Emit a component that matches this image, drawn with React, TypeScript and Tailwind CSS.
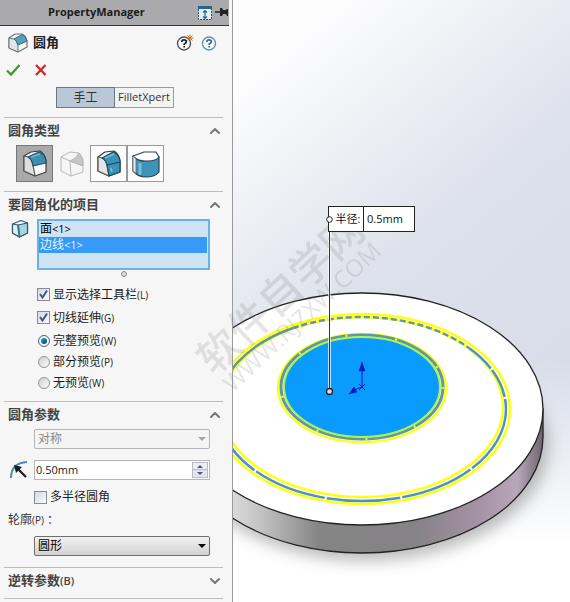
import { useState, type ReactNode } from 'react'
import clsx from 'clsx'
import { ChevronDown, ChevronUp } from 'lucide-react'

function ConstantIcon() {
  return (
    <svg viewBox="0 0 24 27" className="h-[27px] w-6" strokeLinejoin="round" strokeWidth="1.200">
      <path d="M1 6 L8 2 L17 1 Q22 4 23 11 V22 L12 26 L1 21 Z" fill="#fdfdfd" stroke="#3c3c3c" />
      <path d="M1 6 L5 7 Q9 9 10 15 L12 26 L1 21 Z" fill="#dedfe0" stroke="#555" />
      <path d="M5 7 L16 2 Q22 4 23 11 V13 L10 16 Q9 9 5 7 Z" fill="#3d8fb0" stroke="#1d5068" />
      <path d="M8 7 L17 4" stroke="#8ec6dc" />
    </svg>
  )
}

function VariableIcon() {
  return (
    <svg viewBox="0 0 24 27" className="h-[27px] w-6" strokeLinejoin="round" stroke="#b7b7b7">
      <path d="M1 7 L10 2 L19 3 L23 9 V22 L11 26 L1 21 Z" fill="#f5f5f5" />
      <path d="M1 7 L10 11 L11 26 M10 11 L23 16" fill="none" />
      <path d="M10 11 Q16 9 19 3 Q23 7 23 16 Z" fill="#c6c6c6" />
    </svg>
  )
}

function FaceIcon() {
  return (
    <svg viewBox="0 0 24 27" className="h-[27px] w-6" strokeLinejoin="round" strokeWidth="1.200">
      <path d="M1 7 L8 2 L17 1 Q22 4 23 11 V22 L12 26 L1 21 Z" fill="#fdfdfd" stroke="#2d3940" />
      <path d="M1 7 L5 8 Q9 10 10 15 L12 26 L1 21 Z" fill="#e3e5e6" stroke="#555" />
      <path d="M5 8 L16 2 Q22 4 23 11 V22 L12 26 L10 15 Q9 10 5 8 Z" fill="#3b91b6" stroke="#174a62" />
      <path d="M10 15 L23 12" stroke="#174a62" />
      <path d="M8 8 L17 4 M14 18 L15 22" stroke="#79bdd8" strokeWidth="1.500" />
    </svg>
  )
}

function FullRoundIcon() {
  return (
    <svg viewBox="0 0 28 28" className="size-7" strokeLinejoin="round" strokeWidth="1.200">
      <path d="M1 6 V21 Q6 27 14 27 Q23 27 27 22 V7 Z" fill="#3c94b8" stroke="#31434c" />
      <path d="M1 6 L12 2 L24 2 L27 7 Q24 11 16 11 Q6 12 1 6 Z" fill="#fff" stroke="#31434c" />
      <path d="M1 6 V21 L4 23.500 V9 Z" fill="#dfe9ed" stroke="#5d6d75" strokeWidth="0.800" />
      <path d="M8 13 V25" stroke="#79bdd8" strokeWidth="3" />
    </svg>
  )
}

function TitleIcon() {
  return (
    <svg viewBox="0 0 20 20" className="size-5" strokeLinejoin="round">
      <path d="M1 5 L7 1 L14 1 Q18 3 19 8 V14 L10 19 L1 15 Z" fill="#f6f8f8" stroke="#68747a" strokeWidth="1.200" />
      <path d="M1 5 L6 6 Q9 8 10 12 V19 L1 15 Z" fill="#dfe4e6" stroke="#68747a" />
      <path d="M6 6 L14 1.500 Q18 3 19 8 L10 12 Q9 8 6 6 Z" fill="#55a0bb" stroke="#38687b" />
    </svg>
  )
}

function EdgeIcon() {
  return (
    <svg viewBox="0 0 18 20" className="h-5 w-[18px]" strokeLinejoin="round" stroke="#35596b" strokeWidth="1.2">
      <path d="M1.500 5 L10 1.500 L16.500 4 L16.500 14 L8.500 18 L1.500 14 Z" fill="#f4f8fa" />
      <path d="M7 6 L16.500 4 L16.500 14 L8.500 18 Z" fill="#a7d5e2" />
      <path d="M1.500 5 L7 6 L8.500 18 L1.500 14 Z" fill="#e3edf1" />
      <path d="M7 6 L8.500 18" strokeWidth="2" stroke="#347e99" />
    </svg>
  )
}

function RadiusIcon() {
  return (
    <svg viewBox="0 0 20 20" className="size-5" fill="none">
      <path d="M2 18 Q2 3 18 2" stroke="#4d8caf" strokeWidth="2" />
      <path d="M8 8 L17 17" stroke="#1c1c1c" strokeWidth="2.200" />
      <path d="M5 5 L13 7 L7 13 Z" fill="#1c1c1c" />
    </svg>
  )
}

function HelpIcon({ star }: { star?: boolean }) {
  return (
    <svg viewBox="0 0 18 18" className="size-[18px]" fill="none">
      <circle cx="8" cy="9.500" r="6.500" fill="#fafcfd" stroke={star ? '#4d5559' : '#5f93a8'} strokeWidth="1.400" />
      <path d="M5.800 8 Q5.800 5.800 8 5.800 Q10.300 5.800 10.300 7.700 Q10.300 9 8.200 10 L8.200 11 M8.200 12 L8.200 13.600" stroke={star ? '#222' : '#3a6c8f'} strokeWidth="1.700" />
      {star && <path d="M14 0.500 V7.500 M10.500 4 H17.500 M11.500 1.500 L16.500 6.500 M16.500 1.500 L11.500 6.500" stroke="#c4762c" strokeWidth="1" />}
    </svg>
  )
}

function Section({ title, hotkey, open = true, className, children }: {
  title: string
  hotkey?: string
  open?: boolean
  className?: string
  children?: ReactNode
}) {
  const Chevron = open ? ChevronUp : ChevronDown
  return (
    <section className={clsx('ml-1 mr-[9px] border-t border-[#bcbcbc]', className)}>
      <h2 className="h-[27px] text-[13px] font-bold text-[#444]">
        <button className="flex h-full w-full items-center justify-between pb-0.5 pl-1" aria-expanded={open}>
          <span>{title}{hotkey && <span className="text-[11px] font-semibold">{hotkey}</span>}</span>
          <Chevron className="size-4 text-[#777]" strokeWidth={3} />
        </button>
      </h2>
      {children}
    </section>
  )
}

function Check({ label, hotkey, defaultChecked }: { label: string; hotkey?: string; defaultChecked?: boolean }) {
  return (
    <label className="flex items-center gap-[3px]">
      <span className="grid size-[13px]">
        <input type="checkbox" defaultChecked={defaultChecked} className="peer col-start-1 row-start-1 size-[13px] appearance-none border border-[#858b91] bg-linear-to-br from-[#d5d9df] to-[#fafafa]" />
        <svg viewBox="0 0 13 13" className="pointer-events-none invisible col-start-1 row-start-1 size-[13px] peer-checked:visible" fill="none">
          <path d="M3 6 L5.500 9.500 L10 2.500" stroke="#3c5694" strokeWidth="2" />
        </svg>
      </span>
      <span>{label}{hotkey && <span className="text-[10px]">{hotkey}</span>}</span>
    </label>
  )
}

function Radio({ label, hotkey, defaultChecked }: { label: string; hotkey: string; defaultChecked?: boolean }) {
  return (
    <label className="flex h-[21px] items-center gap-[3px]">
      <span className="grid size-[13px] place-items-center">
        <input type="radio" name="preview" defaultChecked={defaultChecked} className="peer col-start-1 row-start-1 size-3 appearance-none rounded-full border border-[#949494] bg-linear-to-br from-[#cfcfcf] to-[#fdfdfd] checked:border-[#40657c] checked:from-[#d9edf5]" />
        <span className="pointer-events-none invisible col-start-1 row-start-1 size-[6px] rounded-full bg-linear-to-br from-[#3fa3c8] to-[#0b3c5c] peer-checked:visible" />
      </span>
      <span>{label}<span className="text-[10px]">{hotkey}</span></span>
    </label>
  )
}

function Combo({ id, value, label, disabled }: { id: string; value: string; label?: string; disabled?: boolean }) {
  return (
    <div className="relative">
      <select
        id={id}
        aria-label={label}
        disabled={disabled}
        className={clsx(
          'block h-5 w-full appearance-none rounded-xs border pl-[3px] text-[12px] leading-[18px]',
          disabled ? 'border-[#b5b5b5] bg-[#f4f4f4] text-[#8a8a8a] opacity-100' : 'border-[#6f6f6f] bg-linear-to-b from-[#f2f2f2] to-[#d2d2d2] text-black'
        )}
      >
        <option>{value}</option>
      </select>
      <svg viewBox="0 0 8 4" className={clsx('pointer-events-none absolute right-1 top-2 h-1 w-2', disabled ? 'fill-[#a5a5a5]' : 'fill-black')}>
        <path d="M0 0 H8 L4 4 Z" />
      </svg>
    </div>
  )
}

const types = [
  { label: '恒定大小圆角', Icon: ConstantIcon, style: 'border-[#777] bg-[#a9a9a9]' },
  { label: '变量大小圆角', Icon: VariableIcon, style: 'border-transparent' },
  { label: '面圆角', Icon: FaceIcon, style: 'border-[#999] bg-[#fcfcfc]' },
  { label: '完整圆角', Icon: FullRoundIcon, style: 'border-[#999] bg-[#fcfcfc]' },
]

function PropertyPanel() {
  const [selected, setSelected] = useState('边线')

  return (
    <aside className="w-[233px] shrink-0 border-r border-[#9a9a9a] bg-[#f6f6f6]">
      <header className="mr-[3px] flex h-[26px] items-center border-b border-[#333] bg-[#aaaaad] pl-12">
        <h1 className="flex-1 text-[11px] font-bold text-[#1c1c1c]">PropertyManager</h1>
        <svg viewBox="0 0 32 16" className="h-4 w-8" fill="none">
          <path d="M1.500 4 V14.500 H14.500 V4" fill="#e4eff4" stroke="#245673" strokeDasharray="2 1" />
          <path d="M1 1 H15 V4 H1 Z" fill="#23668a" />
          <path d="M8 6 V13 M6 7.500 L8 5.500 L10 7.500 M6 11.500 L8 13.500 L10 11.500" stroke="#23668a" strokeWidth="1.200" />
          <path d="M18 7 H24" stroke="#222" strokeWidth="1.500" />
          <path d="M23 3 H25 L26 5 H29 L30 4 H31 V11 H30 L29 9 H26 L25 11 H23 Z" fill="#222" />
        </svg>
      </header>

      <div className="flex h-[34px] items-center pl-2 pr-[13px]">
        <TitleIcon />
        <h2 className="ml-[5px] flex-1 text-[13px] font-bold text-[#222]">圆角</h2>
        <div className="flex gap-[7px]">
          <button aria-label="新增功能"><HelpIcon star /></button>
          <button aria-label="帮助"><HelpIcon /></button>
        </div>
      </div>

      <div className="flex h-5 items-center gap-[14px] pl-[6px]">
        <button aria-label="确定">
          <svg viewBox="0 0 14 14" className="size-[14px]" fill="none">
            <path d="M1 7.500 L5 11.500 L13.500 2" stroke="#3b9d29" strokeWidth="2.300" />
          </svg>
        </button>
        <button aria-label="取消">
          <svg viewBox="0 0 14 14" className="size-[14px]" fill="none">
            <path d="M2 2 L11.500 12 M11.500 2 L2 12" stroke="#d02a22" strokeWidth="2.300" />
          </svg>
        </button>
      </div>

      <div className="mb-[9px] ml-14 mt-[7px] flex h-[21px] text-[#333]">
        <button className="w-[59px] border border-[#6b7885] bg-[#b9c7d6] text-[12px]">手工</button>
        <button className="w-[59px] border border-l-0 border-[#9b9ba2] bg-[#f3f3f3] text-[11px]">FilletXpert</button>
      </div>

      <Section title="圆角类型" className="pb-[9px]">
        <div className="ml-3 flex">
          {types.map(({ label, Icon, style }) => (
            <button key={label} aria-label={label} className={clsx('grid h-[37px] flex-none basis-[37px] place-items-center border', style)}>
              <Icon />
            </button>
          ))}
        </div>
      </Section>

      <Section title="要圆角化的项目" className="pb-2">
        <div className="flex pl-[7px] pr-[13px]">
          <div className="w-[26px]"><EdgeIcon /></div>
          <ul role="listbox" className="h-[51px] flex-1 border-2 border-[#66b3e6] bg-[#cfe3f5] pr-px text-[12px] leading-4">
            {['面', '边线'].map(name => (
              <li
                key={name}
                role="option"
                aria-selected={selected === name}
                onClick={() => setSelected(name)}
                className={clsx('px-px', selected === name ? 'bg-[#3799f8] text-[#e6f3ff]' : 'text-black')}
              >
                {name}<span className="text-[11px]">&lt;1&gt;</span>
              </li>
            ))}
          </ul>
        </div>
        <div className="flex h-[13px] justify-center pl-5 pt-px">
          <span className="size-[6px] rounded-full border border-[#888] bg-[#ddd]" />
        </div>
        <div className="pl-[33px] text-[12px] text-[#1c1c1c]">
          <div className="grid auto-rows-[23px] pb-px">
            <Check label="显示选择工具栏" hotkey="(L)" defaultChecked />
            <Check label="切线延伸" hotkey="(G)" defaultChecked />
          </div>
          <Radio label="完整预览" hotkey="(W)" defaultChecked />
          <Radio label="部分预览" hotkey="(P)" />
          <Radio label="无预览" hotkey="(W)" />
        </div>
      </Section>

      <Section title="圆角参数" className="pb-[11px]">
        <div className="pl-[30px] pr-[13px]">
          <Combo id="symmetry" label="圆角方法" value="对称" disabled />
        </div>
        <div className="mt-[11px] flex pl-[5px] pr-[13px]">
          <div className="w-[25px]"><RadiusIcon /></div>
          <div className="flex h-5 flex-1 border border-[#b5b5b5] bg-white">
            <input aria-label="半径" defaultValue="0.50mm" className="w-0 flex-1 pl-px text-[11px] text-[#1c1c1c] outline-none" />
            <div className="my-px mr-px grid w-4 grid-rows-2">
              <button aria-label="增加" className="grid place-items-center border border-[#b9bcc8] bg-[#eceef5]">
                <svg viewBox="0 0 6 3" className="h-[3px] w-[6px] fill-[#4b5878]"><path d="M0 3 H6 L3 0 Z" /></svg>
              </button>
              <button aria-label="减少" className="grid place-items-center border border-t-0 border-[#b9bcc8] bg-[#e3e6f0]">
                <svg viewBox="0 0 6 3" className="h-[3px] w-[6px] fill-[#4b5878]"><path d="M0 0 H6 L3 3 Z" /></svg>
              </button>
            </div>
          </div>
        </div>
        <div className="mt-2 grid h-4 pl-[30px] text-[12px] text-[#1c1c1c]">
          <Check label="多半径圆角" />
        </div>
        <label htmlFor="profile" className="mt-2 block h-4 pl-1 text-[12px] leading-4 text-[#333]">
          轮廓<span className="text-[10px]">(P)</span> ：
        </label>
        <div className="mt-2 pl-[30px] pr-[13px]">
          <Combo id="profile" value="圆形" />
        </div>
      </Section>

      <Section title="逆转参数" hotkey="(B)" open={false} className="border-b pb-[3px]" />
    </aside>
  )
}

function Model() {
  return (
    <svg className="absolute inset-0 h-full w-full" fill="none">
      <defs>
        <linearGradient id="side" gradientUnits="userSpaceOnUse" x1="-10" y1="0" x2="310" y2="0">
          <stop offset="0" stopColor="#e2e2e2" />
          <stop offset="0.120" stopColor="#c2c2c2" />
          <stop offset="0.300" stopColor="#858585" />
          <stop offset="0.600" stopColor="#858385" />
          <stop offset="0.800" stopColor="#a592a5" />
          <stop offset="0.920" stopColor="#b9a6b9" />
          <stop offset="1" stopColor="#6d656d" />
        </linearGradient>
        <filter id="shadow" x="-20%" y="-20%" width="140%" height="140%">
          <feGaussianBlur stdDeviation="8" />
        </filter>
      </defs>

      {/* disc body */}
      <ellipse cx="133" cy="445" rx="182" ry="116" fill="#777" opacity="0.500" filter="url(#shadow)" />
      <path d="M-52 409 V437 A181 116 0 0 0 310 437 V409 Z" fill="url(#side)" stroke="#222" strokeWidth="1.300" />
      <ellipse cx="129" cy="409" rx="181" ry="116" fill="#fff" stroke="#222" strokeWidth="1.300" />

      {/* outer fillet preview */}
      <ellipse cx="129" cy="409" rx="148" ry="95" stroke="#ffff14" strokeWidth="2.500" />
      <ellipse cx="129" cy="407" rx="141" ry="90" stroke="#ffff14" strokeWidth="2.500" />
      <path d="M-15 409 A144 92 0 0 0 273 409" stroke="#4c93c4" strokeWidth="2.500" strokeDasharray="74 2" />
      <path d="M-15 409 A144 92 0 0 1 60 328" stroke="#5f9a9c" strokeWidth="2.500" />
      <path d="M60 328 A144 92 0 0 1 236 348" stroke="#5f9a9c" strokeWidth="2.500" strokeDasharray="6 3" />
      <path d="M236 348 A144 92 0 0 1 273 409" stroke="#4c93c4" strokeWidth="2.500" strokeDasharray="30 2" />

      {/* inner face */}
      <ellipse cx="129" cy="388" rx="84" ry="54" fill="#fff" stroke="#ffff14" strokeWidth="2.500" />
      <ellipse cx="129" cy="387" rx="81" ry="52" stroke="#5a9aa8" strokeWidth="3" />
      <ellipse cx="129" cy="387" rx="81" ry="52" stroke="#d9f24a" strokeWidth="3" strokeDasharray="2 48" />
      <ellipse cx="129" cy="387" rx="78" ry="50" fill="#0a9bff" stroke="#b4f04a" strokeWidth="2" />

      {/* origin triad */}
      <g stroke="#0818c4" fill="#0818c4">
        <path d="M129 387 V369 M129 387 L121 390 M126 384 L132 390 M132 384 L126 390" />
        <path d="M129 362 L132 371 H126 Z M116 394 L121 387 L124 392 Z" strokeWidth="0.500" />
      </g>

      <path d="M96.500 231 V388" stroke="#fff" strokeWidth="3" opacity="0.700" />
      <path d="M96.500 231 V388" stroke="#333" />
      <circle cx="96.500" cy="391.500" r="3" fill="#ddd" stroke="#222" strokeWidth="1.300" />
    </svg>
  )
}

export default function App() {
  return (
    <div className="relative flex min-h-screen overflow-hidden bg-white font-['Open_Sans','Noto_Sans_CJK_SC',sans-serif]">
      <PropertyPanel />
      <main className="relative flex-1">
        <div className="absolute inset-0 bg-linear-140 from-[#fdfdfe] from-10% via-[#dde1eb] via-45% to-[#d3d9e7]" />
        <div className="absolute inset-0 bg-linear-to-b from-transparent from-60% to-white to-90%" />
        <Model />
        <div className="absolute left-[95px] top-[206px] z-10 flex h-[26px] w-[87px] items-center border border-[#222] bg-white text-[11px] text-[#111]">
          <svg viewBox="0 0 7 7" className="-ml-[3px] size-[7px] shrink-0">
            <circle cx="3.500" cy="3.500" r="2.800" fill="#fff" stroke="#222" />
          </svg>
          <span className="flex h-full w-[31px] items-center justify-center border-r border-[#222]">半径:</span>
          <span className="pl-[3px]">0.5mm</span>
        </div>
      </main>

      {/* site watermark */}
      <div className="pointer-events-none absolute left-[173px] top-[270px] w-[230px] -rotate-43 whitespace-nowrap text-center text-[#808080] opacity-20" aria-hidden="true">
        <div className="text-[42px] font-medium leading-[40px]">软件自学网</div>
        <div className="text-[24px] leading-[24px]">WWW.RJZXW.COM</div>
      </div>
    </div>
  )
}
